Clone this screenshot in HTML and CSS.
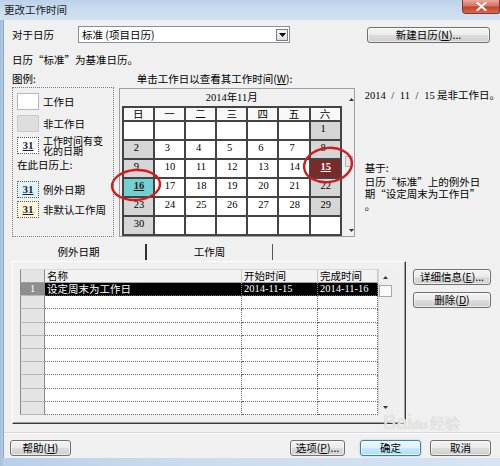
FILE: index.html
```html
<!DOCTYPE html>
<html lang="zh-CN">
<head>
<meta charset="utf-8">
<title>更改工作时间</title>
<link rel="stylesheet" href="styles.css">
</head>
<body>
<div class="window">
  <div class="titlebar">
    <span class="title">更改工作时间</span>
    <div class="close"><svg width="11" height="9" viewBox="0 0 11 9"><path d="M1.5 1 L9.5 8 M9.5 1 L1.5 8" stroke="#fff" stroke-width="2.2" stroke-linecap="round"/></svg></div>
  </div>
  <div class="client">
    <div class="row1">
      <span class="for-label">对于日历</span>
      <div class="combo"><span class="combo-text">标准 (项目日历)</span><span class="combo-btn"><svg width="7" height="4" viewBox="0 0 7 4"><path d="M0 0h7L3.5 4z" fill="#000"/></svg></span></div>
      <button class="btn btn-new">新建日历(<u>N</u>)...</button>
    </div>
    <div class="baseline">日历“标准”为基准日历。</div>
    <div class="main">
      <div class="legend-col">
        <div class="sec-label">图例:</div>
        <div class="legend">
          <div class="lg-item"><span class="sw sw-work"></span><span class="lg-text">工作日</span></div>
          <div class="lg-item"><span class="sw sw-non"></span><span class="lg-text">非工作日</span></div>
          <div class="lg-item i3"><span class="sw sw-31 sw-chg">31</span><span class="lg-text lg-two">工作时间有变<br>化的日期</span></div>
          <div class="lg-sub">在此日历上:</div>
          <div class="lg-item i4"><span class="sw sw-31 sw-exc">31</span><span class="lg-text">例外日期</span></div>
          <div class="lg-item"><span class="sw sw-31 sw-wk">31</span><span class="lg-text">非默认工作周</span></div>
        </div>
      </div>
      <div class="cal-col">
        <div class="sec-label cal-label">单击工作日以查看其工作时间(<u>W</u>):</div>
        <div class="cal">
          <div class="cal-main">
            <div class="cal-head">2014年11月</div>
            <div class="grid">
              <div class="dn">日</div><div class="dn">一</div><div class="dn">二</div><div class="dn">三</div><div class="dn">四</div><div class="dn">五</div><div class="dn">六</div>
              <div class="d"></div><div class="d"></div><div class="d"></div><div class="d"></div><div class="d"></div><div class="d"></div><div class="d g">1</div>
              <div class="d g">2</div><div class="d">3</div><div class="d">4</div><div class="d">5</div><div class="d">6</div><div class="d">7</div><div class="d g">8</div>
              <div class="d g">9</div><div class="d">10</div><div class="d">11</div><div class="d">12</div><div class="d">13</div><div class="d">14</div><div class="d sel">15</div>
              <div class="d exc">16</div><div class="d">17</div><div class="d">18</div><div class="d">19</div><div class="d">20</div><div class="d">21</div><div class="d g">22</div>
              <div class="d g">23</div><div class="d">24</div><div class="d">25</div><div class="d">26</div><div class="d">27</div><div class="d">28</div><div class="d g">29</div>
              <div class="d g">30</div><div class="d"></div><div class="d"></div><div class="d"></div><div class="d"></div><div class="d"></div><div class="d"></div>
            </div>
          </div>
          <div class="cal-scroll">
            <svg class="arr-up" width="5" height="3" viewBox="0 0 5 3"><path d="M0 3h5L2.5 0z" fill="#333"/></svg>
            <div class="cal-thumb"></div>
            <svg class="arr-down" width="5" height="3" viewBox="0 0 5 3"><path d="M0 0h5L2.5 3z" fill="#333"/></svg>
          </div>
          <svg class="marks" width="236" height="149" viewBox="0 0 236 149">
            <ellipse cx="208" cy="76" rx="24" ry="17" fill="none" stroke="#d21c1c" stroke-width="2.4" transform="rotate(-8 208 76)"/>
            <ellipse cx="16" cy="96" rx="24" ry="15" fill="none" stroke="#d21c1c" stroke-width="2.4" transform="rotate(-4 16 96)"/>
          </svg>
        </div>
      </div>
      <div class="info-col">
        <div class="info-date"><span class="num">2014 / 11 / 15</span> 是非工作日。</div>
        <div class="info-based">基于:</div>
        <div class="info-desc">日历“标准”上的例外日<br>期“设定周末为工作日”<br>。</div>
      </div>
    </div>
    <div class="tabs">
      <div class="tab tab-active">例外日期</div>
      <div class="tab tab-2">工作周</div>
    </div>
    <div class="panel-row">
      <div class="panel">
        <div class="table">
          <div class="rows">
            <div class="trow thead"><div class="c num"></div><div class="c name">名称</div><div class="c start">开始时间</div><div class="c fin">完成时间</div></div>
            <div class="trow sel"><div class="c num">1</div><div class="c name">设定周末为工作日</div><div class="c start date">2014-11-15</div><div class="c fin date">2014-11-16</div></div>
            <div class="trow"><div class="c num"></div><div class="c name"></div><div class="c start"></div><div class="c fin"></div></div>
            <div class="trow"><div class="c num"></div><div class="c name"></div><div class="c start"></div><div class="c fin"></div></div>
            <div class="trow"><div class="c num"></div><div class="c name"></div><div class="c start"></div><div class="c fin"></div></div>
            <div class="trow"><div class="c num"></div><div class="c name"></div><div class="c start"></div><div class="c fin"></div></div>
            <div class="trow"><div class="c num"></div><div class="c name"></div><div class="c start"></div><div class="c fin"></div></div>
            <div class="trow"><div class="c num"></div><div class="c name"></div><div class="c start"></div><div class="c fin"></div></div>
            <div class="trow"><div class="c num"></div><div class="c name"></div><div class="c start"></div><div class="c fin"></div></div>
            <div class="trow"><div class="c num"></div><div class="c name"></div><div class="c start"></div><div class="c fin"></div></div>
            <div class="trow"><div class="c num"></div><div class="c name"></div><div class="c start"></div><div class="c fin"></div></div>
          </div>
          <div class="tscroll">
            <svg class="t-up" width="5" height="3" viewBox="0 0 5 3"><path d="M0 3h5L2.5 0z" fill="#333"/></svg>
            <div class="t-thumb"></div>
            <svg class="t-down" width="5" height="3" viewBox="0 0 5 3"><path d="M0 0h5L2.5 3z" fill="#333"/></svg>
          </div>
        </div>
      </div>
      <div class="side">
        <button class="btn">详细信息(<u>E</u>)...</button>
        <button class="btn">删除(<u>D</u>)</button>
      </div>
    </div>
    <div class="sep"></div>
    <div class="bottom">
      <button class="btn btn-help">帮助(<u>H</u>)</button>
      <button class="btn btn-opt">选项(<u>P</u>)...</button>
      <button class="btn btn-ok">确定</button>
      <button class="btn btn-cancel">取消</button>
    </div>
    <div class="watermark">Bai<span class="wm-du">du</span><span class="wm-cn">经验</span></div>
  </div>
</div>
</body>
</html>
```

FILE: styles.css
```css
* { box-sizing: border-box; }
html, body { margin: 0; padding: 0; }
body {
  width: 500px;
  height: 466px;
  overflow: hidden;
  font-family: "Noto Sans CJK SC", "Liberation Sans", sans-serif;
  font-size: 10.5px;
  line-height: 14px;
  color: #000;
  background: #d4e2f1;
}
u { text-decoration: underline; }

.window {
  width: 500px;
  height: 466px;
  display: flex;
  flex-direction: column;
  background: linear-gradient(to right, #a3bedd 0, #b9cfe8 4px, #cbdcef 40%, #d6e4f3 100%);
}

.titlebar {
  height: 20px;
  flex: none;
  display: flex;
  justify-content: space-between;
  align-items: flex-start;
  background: linear-gradient(to bottom, #bcd2ea 0%, #c9dbef 50%, #d3e2f2 100%);
}
.title {
  padding: 3px 0 0 4px;
  line-height: 14px;
  color: #1b1b1b;
}
.close {
  width: 38px;
  height: 14px;
  border: 1px solid #7a3a33;
  border-top: none;
  border-radius: 0 0 3px 4px;
  background: linear-gradient(to bottom, #e8aa9e 0%, #d7725f 45%, #c4422c 55%, #d76a50 100%);
  display: flex;
  align-items: center;
  justify-content: center;
}

.client {
  flex: 1;
  margin: 0 0 8px 4px;
  padding-left: 8px;
  background: #f0f0f0;
  display: flex;
  flex-direction: column;
  position: relative;
  box-shadow: -1px 0 0 #8fa7c3;
}

/* buttons */
.btn {
  font: inherit;
  color: #000;
  padding: 0;
  height: 16px;
  line-height: 14px;
  border: 1px solid #707070;
  border-radius: 3px;
  background: linear-gradient(to bottom, #f3f3f3 0%, #ebebeb 48%, #dcdcdc 52%, #cfcfcf 100%);
  box-shadow: inset 0 0 0 1px rgba(255, 255, 255, 0.55);
  text-align: center;
  white-space: nowrap;
}

/* row 1 */
.row1 {
  margin-top: 6px;
  height: 17px;
  display: flex;
  align-items: center;
}
.for-label { width: 66px; }
.combo {
  width: 212px;
  height: 17px;
  background: #fff;
  border: 1px solid #8a8e96;
  display: flex;
  align-items: center;
  justify-content: space-between;
  padding-left: 3px;
}
.combo-btn {
  width: 12px;
  height: 12px;
  margin-right: 1px;
  border: 1px solid #7d7d7d;
  background: linear-gradient(#f6f6f6, #dedede);
  display: flex;
  align-items: center;
  justify-content: center;
}
.btn-new {
  margin-left: 77px;
  width: 123px;
}

.baseline {
  margin-top: 10px;
  line-height: 14px;
}

/* main area */
.main {
  margin-top: 5px;
  height: 165px;
  display: flex;
}
.sec-label { line-height: 14px; }

.legend-col { width: 105px; }
.legend {
  margin-top: 1px;
  height: 150px;
  border: 1px dotted #7a7a7a;
  padding: 5px 0 0 4px;
}
.lg-item {
  display: flex;
  align-items: center;
  height: 17px;
  margin-bottom: 5px;
}
.lg-item.i3 { margin-top: 2px; }
.lg-item.i4 { margin-bottom: 3px; }
.sw {
  width: 22px;
  height: 17px;
  flex: none;
}
.lg-text {
  margin-left: 4px;
  line-height: 12px;
  white-space: nowrap;
}
.lg-two {
  font-size: 10px;
  line-height: 10px;
}
.lg-sub {
  line-height: 12px;
  margin-bottom: 10px;
}
.sw-work { background: #fff; border: 1px solid #b8b8b8; }
.sw-non { background: #dedede; border: 1px solid #cacaca; }
.sw-31 {
  border: 1px dotted #555;
  font-family: "Liberation Serif", serif;
  font-weight: bold;
  font-size: 11px;
  line-height: 15px;
  text-align: center;
  text-decoration: underline;
  color: #1c1c40;
}
.sw-chg { background: #fff; }
.sw-exc { background: #dcf5f6; }
.sw-wk { background: #fff7d8; }

/* calendar */
.cal-col {
  width: 236px;
  margin-left: 5px;
}
.cal-label { padding-left: 18px; white-space: nowrap; }
.cal {
  margin-top: 2px;
  height: 149px;
  border: 1px solid #9e9e9e;
  background: #f0f0f0;
  display: flex;
  position: relative;
}
.cal-main {
  width: 222px;
  padding-left: 2px;
}
.cal-head {
  height: 17px;
  line-height: 17px;
  text-align: center;
  font-family: "Liberation Serif", "Noto Sans CJK SC", serif;
}
.grid {
  width: 220px;
  display: grid;
  grid-template-columns: repeat(7, 1fr);
  grid-template-rows: 12px repeat(6, 17px);
  gap: 2px;
  padding: 2px;
  background: #444;
}
.dn {
  background: #f8f8f8;
  text-align: center;
  line-height: 12px;
}
.d {
  background: #fff;
  padding: 1px 0 0 10px;
  line-height: 12px;
  font-family: "Liberation Serif", serif;
  font-size: 10.5px;
}
.d.g { background: #d6d6d6; }
.d.sel {
  background: #7b2a2a;
  color: #fff;
  font-weight: bold;
  text-decoration: underline;
}
.d.exc {
  background: #73d0d1;
  color: #1a1a1a;
  font-weight: bold;
  text-decoration: underline;
}
.cal-scroll {
  width: 12px;
  display: flex;
  flex-direction: column;
  padding: 9px 0 4px;
}
.arr-up, .arr-down { display: block; margin-left: 7px; }
.arr-down { margin-top: auto; }
.cal-thumb {
  margin: 55px 0 0 3px;
  width: 8px;
  height: 11px;
  background: #e6e6e6;
  border: 1px solid #b4b4b4;
}
.marks {
  position: absolute;
  left: 0;
  top: 0;
  overflow: visible;
  pointer-events: none;
}

/* info */
.info-col {
  margin-left: 10px;
  padding-top: 16px;
  white-space: nowrap;
}
.info-date { line-height: 14px; }
.num {
  font-family: "Liberation Serif", serif;
  word-spacing: 3px;
}
.info-based {
  margin-top: 59px;
  line-height: 12px;
}
.info-desc {
  margin-top: 2px;
  line-height: 12px;
}

/* tabs */
.tabs {
  margin-top: 6px;
  height: 18px;
  display: flex;
  align-items: flex-end;
}
.tab {
  text-align: center;
}
.tab-active {
  width: 133px;
  height: 18px;
  line-height: 18px;
}
.tab-2 {
  width: 128px;
  height: 16px;
  line-height: 16px;
  margin-bottom: 1px;
  border-left: 2px solid #333;
  border-right: 1px solid #555;
}

/* panel */
.panel-row { display: flex; }
.panel {
  width: 394px;
  height: 163px;
  border-top: 1px solid #fff;
  border-left: 1px solid #fff;
  border-right: 1px solid #3a3a3a;
  border-bottom: 1px solid #3a3a3a;
  box-shadow: inset -1px -1px 0 #a0a0a0;
  padding: 7px 0 0 7px;
}
.table {
  width: 373px;
  height: 146px;
  display: flex;
}
.rows { width: 358px; background: #fff; }
.trow {
  display: flex;
  height: 13.2px;
}
.thead { height: 14px; }
.c {
  border-right: 1px dotted #666;
  border-bottom: 1px dotted #666;
  padding-left: 2px;
  line-height: 12px;
  white-space: nowrap;
}
.c.num {
  width: 25px;
  padding: 0;
  text-align: center;
  background: #e4e4e4;
  border-left: 1px solid #8a8a8a;
  border-right: 1px solid #8a8a8a;
  border-bottom: 1px solid #b9b9b9;
}
.c.name { width: 197px; }
.c.start { width: 76px; }
.c.fin { width: 60px; }
.thead .c {
  background: #f2f2f2;
  border-right: 1px solid #c8c8c8;
  border-bottom: 1px solid #a0a0a0;
  border-top: 1px solid #dadada;
}
.thead .c.num {
  background: #e4e4e4;
  border-right: 1px solid #8a8a8a;
}
.sel .c {
  background: #000;
  color: #fff;
  border-right-color: #8a8a8a;
}
.sel .c.num {
  background: #8e8e8e;
  color: #fff;
  font-family: "Liberation Serif", serif;
}
.date { font-family: "Liberation Serif", serif; }
.tscroll {
  width: 15px;
  background: #efefef;
  border-left: 1px solid #d6d6d6;
  display: flex;
  flex-direction: column;
  padding: 7px 0 6px;
}
.t-up, .t-down { display: block; margin-left: 4px; }
.t-down { margin-top: auto; }
.t-thumb {
  margin: 6px 0 0 0;
  width: 13px;
  height: 12px;
  background: #fbfbfb;
  border: 1px solid #a8a8a8;
}

.side {
  margin-left: 7px;
  padding-top: 8px;
  display: flex;
  flex-direction: column;
  gap: 7px;
}
.side .btn { width: 78px; }

/* bottom */
.sep {
  margin: 8px 0 0 -8px;
  height: 2px;
  border-top: 1px solid #d8d8d8;
  border-bottom: 1px solid #fbfbfb;
}
.bottom {
  margin: 6px 0 0 -2px;
  height: 16px;
  display: flex;
  padding-right: 9px;
}
.btn-help { width: 61px; }
.btn-opt { margin-left: auto; width: 55px; }
.btn-ok {
  margin-left: 15px;
  width: 61px;
  border-color: #3c7fb1;
  background: linear-gradient(to bottom, #eef8fe 0%, #ddf1fc 48%, #c6e9fc 52%, #aedcf6 100%);
  box-shadow: inset 0 0 0 1px rgba(255, 255, 255, 0.7), 0 0 2px #8cc6ee;
}
.btn-cancel { margin-left: 9px; width: 61px; }

.watermark {
  position: absolute;
  left: 379px;
  top: 391px;
  font-family: "Liberation Sans", sans-serif;
  font-size: 20px;
  line-height: 22px;
  color: #e6e6e6;
  text-shadow: 0 0 1px #c4c4c4;
  pointer-events: none;
}
.wm-du {
  font-size: 13px;
  font-weight: bold;
}
.wm-cn {
  margin-left: 2px;
  font-family: "Noto Sans CJK SC", sans-serif;
  font-size: 15px;
}
```
